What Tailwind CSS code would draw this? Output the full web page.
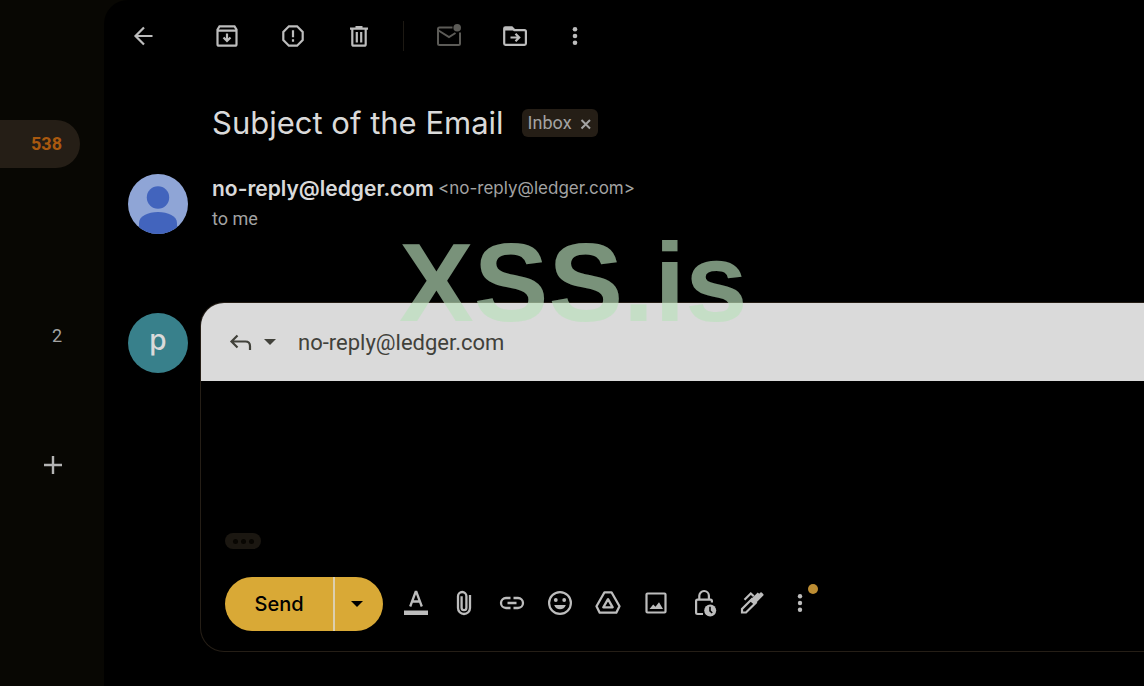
<!DOCTYPE html>
<html lang="en">
<head>
  <meta charset="UTF-8">
  <meta name="viewport" content="width=device-width, initial-scale=1.0">
  <title>Subject of the Email</title>
  <script src="https://cdn.jsdelivr.net/npm/@tailwindcss/browser@4"></script>
</head>
<body class="bg-[#080703] text-[#dadada] font-['Inter','Liberation_Sans',sans-serif]">
  <div class="flex min-h-screen overflow-hidden">

    <!-- Sidebar -->
    <nav class="w-[104px] shrink-0 pt-[120px] text-[#a3a3a3]" aria-label="Folders">
      <a href="#" class="flex h-12 w-20 items-center justify-end rounded-r-full bg-[#251e16] pr-[18px] font-['Roboto',sans-serif] text-lg font-bold text-[#a9590f]">538</a>
      <a href="#" class="mt-36 flex h-12 w-20 items-center justify-end pr-[18px] font-['Roboto',sans-serif] text-lg">2</a>
      <button class="ml-[38px] mt-[90px] flex size-[30px] items-center justify-center" aria-label="New label">
        <svg class="size-[30px]" viewBox="0 0 30 30" stroke="#b4b4b4" stroke-width="2.4"><path d="M15 6v18M6 15h18"/></svg>
      </button>
    </nav>

    <main class="relative min-w-0 flex-1 rounded-tl-3xl bg-black pl-6">
      <!-- Toolbar -->
      <div class="flex h-[72px] items-center text-[#bdbdbd]">
        <button class="mr-[54px]" aria-label="Back">
          <svg class="size-[30px]" viewBox="0 0 30 30" fill="none" stroke="currentColor" stroke-width="2.2"><path d="M24.500 15H8M16 6.500 7.500 15l8.500 8.500"/></svg>
        </button>
        <div class="flex items-center gap-9">
          <button aria-label="Archive">
            <svg class="size-[30px]" viewBox="0 0 30 30" fill="none" stroke="currentColor" stroke-width="2.200"><path d="M5.500 8.500 7.500 5.400h15l2 3.100v14.700q0 1.500-1.500 1.500H7q-1.500 0-1.500-1.500zM5.500 9.600h19"/><path d="M15 12.500v6M11.500 16.500 15 20l3.500-3.500"/></svg>
          </button>
          <button aria-label="Report spam">
            <svg class="size-[30px]" viewBox="0 0 30 30" fill="none" stroke="currentColor" stroke-width="2.200"><path d="M10.900 5.300h8.200l5.600 5.600v8.200l-5.600 5.600h-8.200l-5.600-5.600v-8.200z"/><path d="M15 9.300v7M15 18.300v2.400"/></svg>
          </button>
          <button aria-label="Delete">
            <svg class="size-[30px]" viewBox="0 0 30 30" fill="none" stroke="currentColor" stroke-width="2.200"><path d="M6 7.600h18M11.500 6h7M8.300 8v15.200q0 1.500 1.500 1.500h10.400q1.500 0 1.500-1.500V8M12.800 11v10.500M17.200 11v10.500"/></svg>
          </button>
        </div>
        <div class="ml-[29px] mr-[30px] h-[30px] w-px bg-[#1d1913]"></div>
        <button class="text-[#5c5b57]" aria-label="Mark as unread">
          <svg class="size-[30px]" viewBox="0 0 30 30" fill="none" stroke="currentColor" stroke-width="2"><path d="M18.500 6.500H5.500Q4 6.500 4 8v14.500Q4 24 5.500 24h19q1.500 0 1.500-1.500V11.500M4.500 9.500 15 16l6.500-4"/><circle cx="23.200" cy="6.800" r="3.800" fill="currentColor" stroke="none"/></svg>
        </button>
        <button class="ml-9" aria-label="Move to">
          <svg class="size-[30px]" viewBox="0 0 30 30" fill="none" stroke="currentColor" stroke-width="2.200"><path d="M4.200 7.500q0-1.200 1.300-1.200h6.300l2.600 2.800h10.100q1.400 0 1.400 1.400v12q0 1.300-1.400 1.300h-19q-1.300 0-1.300-1.300z"/><path d="M4.500 6h7.500l2.500 3.500h-10z" fill="currentColor" stroke="none"/><path d="M10.500 16.500h8M15.500 12.800l3.700 3.700-3.700 3.700"/></svg>
        </button>
        <button class="ml-[30px]" aria-label="More">
          <svg class="size-[30px]" viewBox="0 0 30 30" fill="currentColor"><circle cx="15" cy="8.300" r="2.300"/><circle cx="15" cy="15" r="2.300"/><circle cx="15" cy="21.700" r="2.300"/></svg>
        </button>
      </div>

      <!-- Subject -->
      <div class="ml-[84px] mt-6 flex h-[54px] items-center gap-[18px]">
        <h1 class="text-[31px] whitespace-nowrap">Subject of the Email</h1>
        <span class="flex h-7 items-center gap-2 rounded-md bg-[#251e16] px-1.5 font-['Roboto',sans-serif] text-lg text-[#a3a3a3]">Inbox
          <button class="pt-0.5" aria-label="Remove label">
            <svg class="size-3" viewBox="0 0 12 12" stroke="currentColor" stroke-width="2"><path d="m1.500 2 8.500 8.500M10 2 1.500 10.500"/></svg>
          </button>
        </span>
      </div>

      <!-- Sender -->
      <div class="mt-6 flex h-[60px] gap-6">
        <svg class="size-[60px] shrink-0 rounded-full" viewBox="0 0 60 60"><path fill="#8fa5d6" d="M0 0h60v60H0z"/><circle cx="30" cy="23.500" r="11.200" fill="#4264bd"/><path fill="#4264bd" d="M11 60V49c0-7 9-11 19-11s19 4 19 11v11z"/></svg>
        <div class="whitespace-nowrap">
          <div class="flex h-[30px] items-center gap-1">
            <span class="text-[21px] font-semibold">no-reply@ledger.com</span>
            <span class="text-[17px] text-[#a3a3a3]">&lt;no-reply@ledger.com&gt;</span>
          </div>
          <div class="flex h-[30px] items-center font-['Roboto',sans-serif] text-lg text-[#a3a3a3]">to me</div>
        </div>
      </div>

      <!-- Reply editor -->
      <div class="mt-[68px] flex gap-3">
        <div class="mt-[11px] flex size-[60px] shrink-0 items-center justify-center rounded-full bg-[#38808b] pb-1.5 text-[28px] font-medium">p</div>
        <section class="min-w-0 flex-1 overflow-hidden rounded-l-3xl border border-r-0 border-[#251e16]">
          <div class="flex h-[78px] items-center bg-[#dadada] pl-6 text-[#41413a]">
            <button class="flex items-center gap-[9px]" aria-label="Type of response">
              <svg class="size-[30px]" viewBox="0 0 30 30" fill="none" stroke="currentColor" stroke-width="2.200"><path d="M12.500 8.500 6.500 14.500l6 6M7 14.500h13.500q4.500 0 4.500 4.500v4"/></svg>
              <svg class="h-1.5 w-3" viewBox="0 0 12 6" fill="currentColor"><path d="M0 0h12L6 6z"/></svg>
            </button>
            <span class="ml-[22px] font-['Roboto',sans-serif] text-[22px]">no-reply@ledger.com</span>
          </div>
          <div class="h-[152px]" contenteditable="true" role="textbox" aria-label="Message body"></div>
          <button class="ml-6 flex h-4 w-9 items-center justify-center gap-[3px] rounded-full bg-[#1b1711]" aria-label="Show trimmed content">
            <i class="size-[5px] rounded-full bg-[#080602]"></i><i class="size-[5px] rounded-full bg-[#080602]"></i><i class="size-[5px] rounded-full bg-[#080602]"></i>
          </button>

          <div class="mb-5 ml-6 mt-7 flex items-center text-[#bdbdbd]">
            <div class="mr-[9px] flex h-[54px] shrink-0 overflow-hidden rounded-full bg-[#d9a936] text-black">
              <button class="w-[108px] text-xl font-medium">Send</button>
              <button class="flex w-[50px] items-center border-l-2 border-[#dccfae] pl-4" aria-label="More send options">
                <svg class="h-1.5 w-3" viewBox="0 0 12 6" fill="currentColor"><path d="M0 0h12L6 6z"/></svg>
              </button>
            </div>
            <div class="flex pb-0.5">
              <button class="flex w-12 justify-center" aria-label="Formatting options">
                <svg class="size-[30px]" viewBox="0 0 30 30"><path d="M3 22.500h24v4.500H3z" fill="currentColor"/><path d="M9.200 18.500 14.600 4h.8l5.400 14.500M11 13.500h8" fill="none" stroke="currentColor" stroke-width="2.300"/></svg>
              </button>
              <button class="flex w-12 justify-center" aria-label="Attach files">
                <svg class="size-[30px]" viewBox="0 0 30 30" fill="none" stroke="currentColor" stroke-width="2.300"><path d="M21 7v13a6 6 0 0 1-12 0V8.200a4.200 4.200 0 0 1 8.400 0v11.600a2.400 2.400 0 0 1-4.800 0V8.200"/></svg>
              </button>
              <button class="flex w-12 justify-center" aria-label="Insert link">
                <svg class="size-[30px]" viewBox="0 0 30 30" fill="none" stroke="currentColor" stroke-width="2.300"><path d="M13.500 10H9a5 5 0 0 0 0 10h4.500M16.500 10H21a5 5 0 0 1 0 10h-4.500M10.500 15h9"/></svg>
              </button>
              <button class="flex w-12 justify-center" aria-label="Insert emoji">
                <svg class="size-[30px]" viewBox="0 0 30 30" fill="currentColor"><circle cx="15" cy="15" r="10.900" fill="none" stroke="currentColor" stroke-width="2.200"/><circle cx="10.800" cy="12" r="1.900"/><circle cx="19.200" cy="12" r="1.900"/><path d="M9.200 17h11.600q-1.600 4.300-5.800 4.300T9.200 17z"/></svg>
              </button>
              <button class="flex w-12 justify-center" aria-label="Insert files using Drive">
                <svg class="size-[30px]" viewBox="0 0 30 30" fill="none" stroke="currentColor" stroke-width="2.300" stroke-linejoin="round"><path d="M11.500 4.300h7l8 14-3.200 6.400H6.700l-3.200-6.400z"/><path d="M15 11.200 10.300 19.300h9.400z"/></svg>
              </button>
              <button class="flex w-12 justify-center" aria-label="Insert photo">
                <svg class="size-[30px]" viewBox="0 0 30 30" fill="currentColor"><rect x="5.500" y="5.500" width="19" height="19" rx="1" fill="none" stroke="currentColor" stroke-width="2.200"/><path d="m8.500 21 3.700-4.500 2.300 2.300 3.500-4.600 4 6.800z"/></svg>
              </button>
              <button class="flex w-12 justify-center" aria-label="Toggle confidential mode">
                <svg class="size-[30px]" viewBox="0 0 30 30" fill="none" stroke="currentColor" stroke-width="2.200"><path d="M14 26H8.500q-1.400 0-1.400-1.400V13q0-1.400 1.400-1.400h13q1.400 0 1.400 1.400v1.500M10.300 11.500V7.800a4.800 4.800 0 0 1 9.600 0v3.700"/><circle cx="21.200" cy="22.500" r="6" fill="currentColor" stroke="none"/><path d="M21 18.800v4l2.200 2.200" stroke="#000" stroke-width="1.600"/></svg>
              </button>
              <button class="flex w-12 justify-center" aria-label="Insert signature">
                <svg class="size-[30px]" viewBox="0 0 30 30" fill="none" stroke="currentColor" stroke-width="2.200"><path d="M5 24.500V21L15 11l3.800 3.800-9.800 9.700z"/><path d="m12.500 12.700 8.200-8.200 1.500 1.300 1.200-1.200q.8-.7 1.600.1l1.200 1.200q.8.800.1 1.600L17.200 16.700z" fill="currentColor" stroke="none"/><path d="m7.500 11.800 6.300-6.300 3 2.800"/></svg>
              </button>
              <button class="relative flex w-12 justify-center" aria-label="More options">
                <svg class="size-[30px]" viewBox="0 0 30 30" fill="currentColor"><circle cx="15" cy="8.300" r="2.200"/><circle cx="15" cy="15" r="2.200"/><circle cx="15" cy="21.700" r="2.200"/></svg>
                <span class="absolute -top-1 right-1.5 size-2.5 rounded-full bg-[#bd8d33]"></span>
              </button>
            </div>
          </div>
        </section>
      </div>

      <!-- Watermark over the message -->
      <div class="pointer-events-none absolute left-[295px] top-[233px] font-['Liberation_Sans',sans-serif] text-[112px] leading-[100px] font-bold text-[#bae0bc]/65">XSS.is</div>
    </main>
  </div>
</body>
</html>
